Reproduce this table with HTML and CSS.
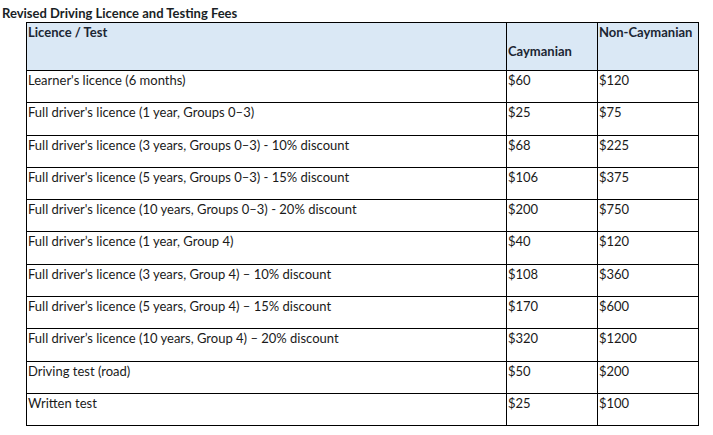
FILE: index.html
```html
<!DOCTYPE html>
<html>
<head>
<meta charset="utf-8">
<link rel="stylesheet" href="styles.css">
</head>
<body>
<div class="title">Revised Driving Licence and Testing Fees</div>
<table class="fees">
  <colgroup><col class="c1"><col class="c2"><col class="c3"></colgroup>
  <thead>
    <tr>
      <th>Licence / Test</th>
      <th class="low">Caymanian</th>
      <th>Non-Caymanian</th>
    </tr>
  </thead>
  <tbody>
    <tr><td>Learner's licence (6 months)</td><td>$60</td><td>$120</td></tr>
    <tr><td>Full driver's licence (1 year, Groups 0–3)</td><td>$25</td><td>$75</td></tr>
    <tr><td>Full driver's licence (3 years, Groups 0–3) - 10% discount</td><td>$68</td><td>$225</td></tr>
    <tr><td>Full driver's licence (5 years, Groups 0–3) - 15% discount</td><td>$106</td><td>$375</td></tr>
    <tr><td>Full driver's licence (10 years, Groups 0–3) - 20% discount</td><td>$200</td><td>$750</td></tr>
    <tr><td>Full driver’s licence (1 year, Group 4)</td><td>$40</td><td>$120</td></tr>
    <tr><td>Full driver’s licence (3 years, Group 4) – 10% discount</td><td>$108</td><td>$360</td></tr>
    <tr><td>Full driver’s licence (5 years, Group 4) – 15% discount</td><td>$170</td><td>$600</td></tr>
    <tr><td>Full driver’s licence (10 years, Group 4) – 20% discount</td><td>$320</td><td>$1200</td></tr>
    <tr><td>Driving test (road)</td><td>$50</td><td>$200</td></tr>
    <tr><td>Written test</td><td>$25</td><td>$100</td></tr>
  </tbody>
</table>
</body>
</html>
```
FILE: styles.css
```css
html, body {
  margin: 0;
  padding: 0;
  background: #ffffff;
}
body {
  font-family: Lato, "Open Sans", sans-serif;
  font-size: 13px;
  color: #1a1a1a;
}
.title {
  font-weight: bold;
  padding: 5px 0 0 2px;
  height: 17px;
  line-height: 17px;
  color: #1a1f26;
}
.fees {
  margin-left: 26px;
  border-collapse: collapse;
  table-layout: fixed;
  width: 673px;
}
.c1 { width: 480px; }
.c2 { width: 91px; }
.c3 { width: 101px; }
.fees th, .fees td {
  border: 1px solid #000;
  padding: 1px 1px;
  text-align: left;
  line-height: 16px;
  white-space: nowrap;
  vertical-align: top;
}
.fees th {
  background: #dae8f5;
  height: 45px;
  font-weight: bold;
  color: #1c2633;
}
.fees th.low {
  padding-top: 20px;
  height: 26px;
}
.fees td {
  height: 29.3px;
}
```
